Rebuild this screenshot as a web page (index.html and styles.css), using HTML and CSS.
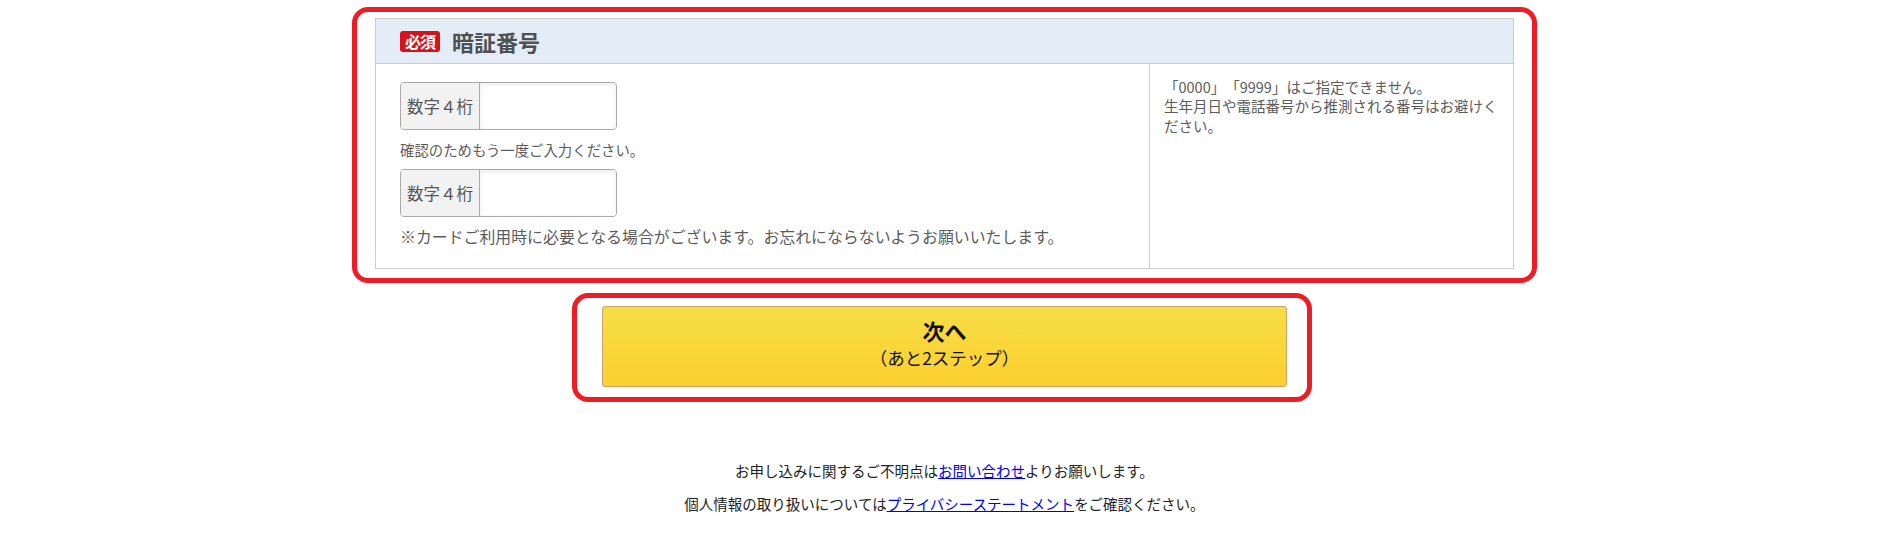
FILE: index.html
```html
<!DOCTYPE html>
<html lang="ja">
<head>
    <meta charset="UTF-8">
    <meta name="viewport" content="width=device-width, initial-scale=1.0">
    <title>暗証番号の登録</title>
    <link rel="stylesheet" href="styles.css">
</head>
<body>
    <div class="page">
        <div class="mark mark-form">
            <div class="panel">
                <div class="panel-head">
                    <span class="req">必須</span>
                    <span class="panel-title">暗証番号</span>
                </div>
                <div class="panel-body">
                    <div class="cell-main">
                        <div class="pin">
                            <span class="pin-label">数字４桁</span>
                            <input class="pin-input" type="password" maxlength="4" name="PIN">
                        </div>
                        <p class="sub">確認のためもう一度ご入力ください。</p>
                        <div class="pin">
                            <span class="pin-label">数字４桁</span>
                            <input class="pin-input" type="password" maxlength="4" name="PIN2">
                        </div>
                        <p class="note">※カードご利用時に必要となる場合がございます。お忘れにならないようお願いいたします。</p>
                    </div>
                    <div class="cell-side">
                        <p>「0000」「9999」はご指定できません。<br>生年月日や電話番号から推測される番号はお避けください。</p>
                    </div>
                </div>
            </div>
        </div>

        <div class="mark mark-btn">
            <button type="button" class="next">
                <span class="next-main">次へ</span>
                <span class="next-sub">（あと2ステップ）</span>
            </button>
        </div>

        <div class="footer">
            <p>お申し込みに関するご不明点は<a href="#">お問い合わせ</a>よりお願いします。</p>
            <p>個人情報の取り扱いについては<a href="#">プライバシーステートメント</a>をご確認ください。</p>
        </div>
    </div>
</body>
</html>
```

FILE: styles.css
```css
body {
    margin: 0;
    font-family: "Noto Sans CJK JP", "Noto Sans", sans-serif;
    color: #333;
    background: #fff;
    text-spacing-trim: space-all;
}
p {
    margin: 0;
}
.page {
    width: 1185px;
    margin: 7px auto 0;
}

/* red highlight frames */
.mark {
    border: 5px solid #ee1c25;
    border-radius: 16px;
    box-sizing: border-box;
}
.mark-form {
    padding: 6px 18px 9px 18px;
}
.mark-btn {
    width: 740px;
    margin: 10px 0 0 220px;
    padding: 8px 21px 10px 25px;
}

.panel {
    border: 1px solid #cccccc;
}
.panel-head {
    display: flex;
    align-items: center;
    height: 44px;
    padding-left: 24px;
    background: #e4ecf7;
    border-bottom: 1px solid #cccccc;
}
.req {
    display: inline-block;
    width: 40px;
    height: 21px;
    line-height: 21px;
    background: #d7121b;
    color: #fff;
    font-size: 16px;
    font-weight: bold;
    text-align: center;
    border-radius: 3px;
    letter-spacing: -1px;
}
.panel-title {
    margin-left: 12px;
    font-size: 22px;
    font-weight: bold;
    color: #505050;
}
.panel-body {
    display: flex;
}
.cell-main {
    width: 774px;
    padding: 18px 24px 20px;
    box-sizing: border-box;
    border-right: 1px solid #cccccc;
}
.cell-side {
    flex: 1;
    padding: 13px 10px 13px 14px;
    font-size: 14.5px;
    line-height: 19.3px;
    color: #5c5c5c;
}

.pin {
    display: flex;
    width: 217px;
    height: 48px;
    box-sizing: border-box;
    border: 1px solid #aaaaaa;
    border-radius: 4px;
    overflow: hidden;
}
.pin-label {
    display: flex;
    align-items: center;
    padding: 0 6px;
    background: #f2f2f2;
    border-right: 1px solid #aaaaaa;
    font-size: 16.5px;
    color: #555;
}
.pin-input {
    flex: 1;
    min-width: 0;
    border: none;
    outline: none;
    background: #fff;
    box-shadow: inset 0 2px 5px rgba(0, 0, 0, 0.08);
}
.sub {
    margin: 9px 0 8px;
    font-size: 14.4px;
    line-height: 22px;
    color: #5c5c5c;
}
.note {
    margin-top: 9px;
    font-size: 15.9px;
    line-height: 22px;
    color: #5c5c5c;
}

.next {
    display: block;
    width: 685px;
    height: 81px;
    padding: 9px 0 14px;
    border: 1px solid #c9a36b;
    border-radius: 3px;
    background: linear-gradient(#f6de45, #fdcf2e);
    font-family: inherit;
    color: #111;
    cursor: pointer;
}
.next-main {
    display: block;
    font-size: 22px;
    font-weight: bold;
    line-height: 28px;
}
.next-sub {
    display: block;
    font-size: 17.5px;
    line-height: 28px;
}

.footer {
    padding-top: 52px;
    text-align: center;
    font-size: 14.5px;
    line-height: 33px;
    color: #222;
}
.footer a {
    color: #0000ee;
}
```
